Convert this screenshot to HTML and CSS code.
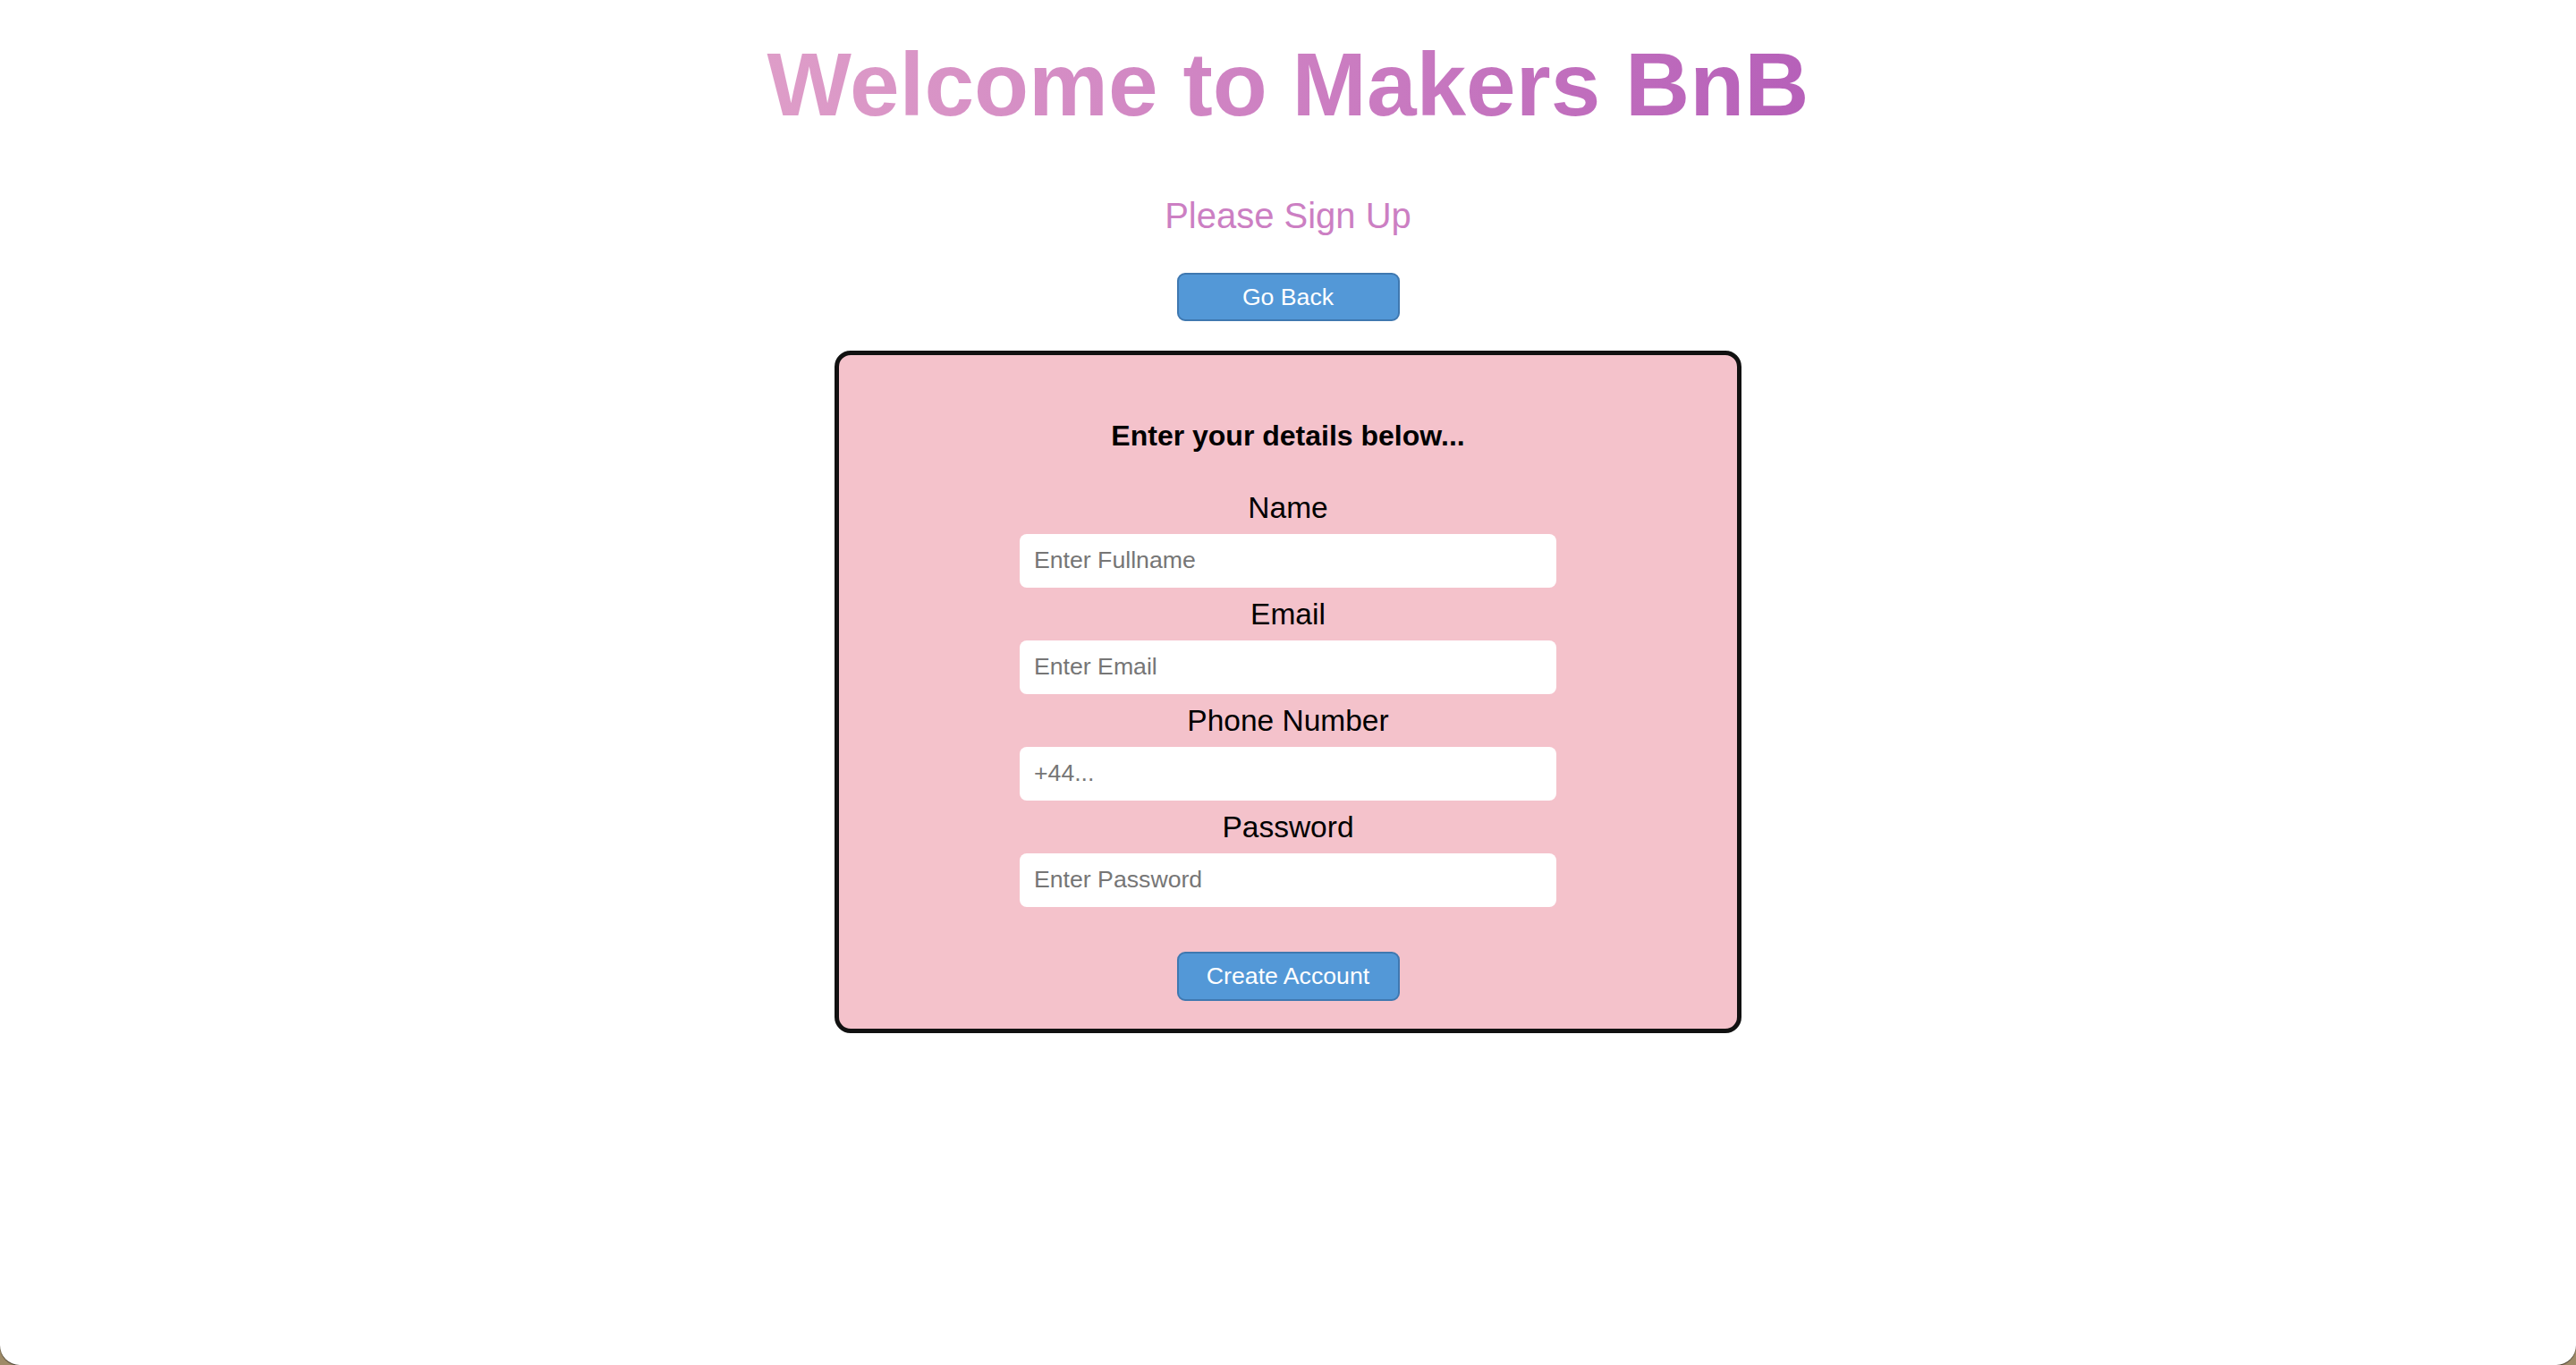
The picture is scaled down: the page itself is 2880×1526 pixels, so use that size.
FILE: index.html
```html
<!DOCTYPE html>
<html lang="en">
<head>
<meta charset="utf-8">
<title>Makers BnB - Sign Up</title>
<link rel="stylesheet" href="styles.css">
</head>
<body>
  <main class="page">
    <h1 class="title">Welcome to Makers BnB</h1>
    <p class="subtitle">Please Sign Up</p>
    <button class="btn btn-back" type="button">Go Back</button>
    <form class="signup-card">
      <h4 class="card-heading">Enter your details below...</h4>
      <div class="fields">
        <label class="field-label" for="name">Name</label>
        <input class="field-input" id="name" type="text" placeholder="Enter Fullname">
        <label class="field-label" for="email">Email</label>
        <input class="field-input" id="email" type="email" placeholder="Enter Email">
        <label class="field-label" for="phone">Phone Number</label>
        <input class="field-input" id="phone" type="tel" placeholder="+44...">
        <label class="field-label" for="password">Password</label>
        <input class="field-input" id="password" type="password" placeholder="Enter Password">
      </div>
      <button class="btn btn-create" type="submit">Create Account</button>
    </form>
  </main>
</body>
</html>
```

FILE: styles.css
```css
html {
  margin: 0;
  padding: 0;
  background: #9f8b68;
}

body {
  margin: 0;
  height: 1526px;
  background: #ffffff;
  border-radius: 0 0 22px 22px;
  box-shadow: 0 1px 1px rgba(0, 0, 0, 0.6);
  font-family: "Liberation Sans", Arial, sans-serif;
  overflow: hidden;
}

.page {
  display: flex;
  flex-direction: column;
  align-items: center;
}

.title {
  margin: 37px 0 0;
  font-size: 100px;
  line-height: 115px;
  font-weight: 700;
  background: linear-gradient(90deg, #de9dc8 0%, #cd80c2 50%, #b660b9 100%);
  -webkit-background-clip: text;
  background-clip: text;
  color: transparent;
  -webkit-text-fill-color: transparent;
}

.subtitle {
  margin: 66px 0 0;
  font-size: 40px;
  line-height: 46px;
  color: #cc7fc3;
}

.btn {
  box-sizing: border-box;
  width: 249px;
  height: 55px;
  padding: 0;
  background: #5398d7;
  border: 2px solid #3f78b0;
  border-radius: 9px;
  color: #ffffff;
  font-family: "Liberation Sans", Arial, sans-serif;
  font-size: 26.67px;
  line-height: 1;
  cursor: pointer;
}

.btn-back {
  margin-top: 41px;
  height: 54px;
}

.signup-card {
  box-sizing: border-box;
  margin-top: 33px;
  width: 1014px;
  height: 763px;
  padding: 72px 0 0;
  background: #f4c2cb;
  border: 5px solid #111111;
  border-radius: 18px;
  display: flex;
  flex-direction: column;
  align-items: center;
}

.card-heading {
  margin: 0;
  font-size: 32px;
  line-height: 37px;
  font-weight: 700;
  color: #000000;
}

.fields {
  margin-top: 43px;
  display: flex;
  flex-direction: column;
  align-items: center;
}

.field-label {
  font-size: 33.5px;
  line-height: 37px;
  color: #000000;
  margin-bottom: 10.5px;
}

.field-input {
  box-sizing: border-box;
  width: 600px;
  height: 60px;
  margin: 0 0 11.5px;
  padding: 0 16px;
  border: none;
  border-radius: 8px;
  background: #ffffff;
  font-family: "Liberation Sans", Arial, sans-serif;
  font-size: 26.67px;
  color: #222222;
  outline: none;
}

.field-input::placeholder {
  color: #767676;
}

.btn-create {
  margin-top: 38.5px;
}
```
